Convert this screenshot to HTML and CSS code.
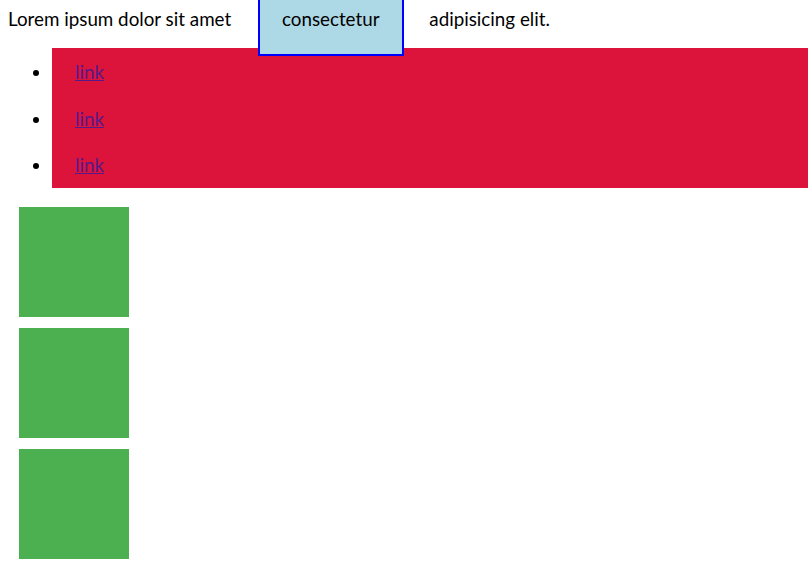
FILE: index.html
```html
<!DOCTYPE html>
<html>
<head>
<meta charset="utf-8">
<link rel="stylesheet" href="styles.css">
</head>
<body>
<p class="intro">Lorem ipsum dolor sit amet <span class="tag">consectetur</span> adipisicing elit.</p>
<ul class="menu">
  <li><a href="#">link</a></li>
  <li><a href="#">link</a></li>
  <li><a href="#">link</a></li>
</ul>
<div class="boxes">
  <div class="box"></div>
  <div class="box"></div>
  <div class="box"></div>
</div>
</body>
</html>
```
FILE: styles.css
```css
body {
  margin: 0;
  font-family: "Source Sans Pro", Lato, "Liberation Sans", sans-serif;
  font-size: 18.8px;
  color: #000;
}
.intro {
  margin: 0;
  padding: 7px 8px 0;
  height: 48px;
  line-height: 23px;
  box-sizing: border-box;
}
.tag {
  background: lightblue;
  border: 2px solid blue;
  padding: 20px 22px 23.5px;
  margin: 0 21px 0 22px;
}
.menu {
  margin: 0 0 0 52px;
  padding: 0;
  background: crimson;
}
.menu li {
  line-height: 23px;
}
.menu a {
  display: block;
  padding: 12px 23px 11.67px;
  color: #551a8b;
}
.boxes {
  display: flex;
  flex-direction: column;
  gap: 11px;
  padding: 19px;
}
.box {
  width: 110px;
  height: 110px;
  background: #4caf50;
}
```
